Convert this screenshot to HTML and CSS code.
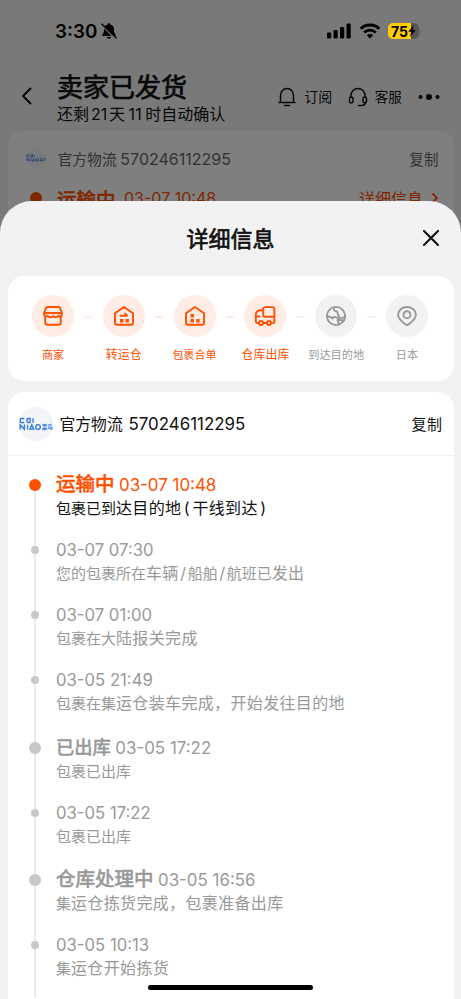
FILE: index.html
```html
<!DOCTYPE html>
<html lang="zh-CN">
<head>
<meta charset="utf-8">
<title>详细信息</title>
<link rel="stylesheet" href="styles.css">
</head>
<body>
<div class="phone">
  <div class="order">
    <header class="nav">
      <svg class="back" width="12" height="18" viewBox="0 0 12 18"><path d="M9.500 1.500 2 9l7.500 7.500"/></svg>
      <div class="nav-title">
        <h1>卖家已发货</h1>
        <p>还剩<span class="days">21</span>天<span class="days">11</span>时自动确认</p>
      </div>
      <svg class="line-icon" width="20" height="20" viewBox="0 0 20 20"><path d="M2 15.500h16M3.500 15V8.500a6.500 7 0 0 1 13 0V15M7.500 18.500h5"/></svg>
      <span class="nav-label subscribe">订阅</span>
      <svg class="line-icon" width="20" height="20" viewBox="0 0 20 20"><path d="M3 10V8.500a7 7 0 0 1 14 0V10M17.500 15c0 2.500-2 3.500-4 3.500h-3"/><rect x="1.500" y="10" width="3.500" height="6" rx="1.700"/><rect x="15" y="10" width="3.500" height="6" rx="1.700"/></svg>
      <span class="nav-label service">客服</span>
      <svg width="22" height="8" viewBox="0 0 22 8"><circle cx="2.500" cy="4" r="2"/><circle cx="11" cy="4" r="3"/><circle cx="19.500" cy="4" r="2"/></svg>
    </header>
    <section class="order-card">
      <div class="order-row">
        <svg class="mini-logo" width="20" height="20" viewBox="0 0 34 34"><circle cx="17" cy="17" r="17"/><use href="#cainiao"/></svg>
        <span class="order-carrier">官方物流 <span class="num">570246112295</span></span>
        <span class="order-copy">复制</span>
      </div>
      <div class="order-state">
        <i class="order-dot"></i><b>运输中</b><span class="num order-time">03-07 10:48</span>
        <span class="order-more">详细信息</span>
        <svg width="8" height="12" viewBox="0 0 8 12"><path d="m1.500 1.500 4.500 4.500-4.500 4.500"/></svg>
      </div>
    </section>
  </div>
  <div class="mask"></div>

  <div class="status">
    <span class="clock">3:30</span>
    <svg width="18" height="18" viewBox="0 0 18 18"><path d="M9 1.200c.8 0 1.300.5 1.500 1.200 2.400.7 3.500 2.500 3.500 5 0 3.200.7 4.100 1.700 5.200.5.600.2 1.400-.7 1.400H3c-.9 0-1.200-.8-.7-1.400C3.300 11.500 4 10.600 4 7.400c0-2.500 1.100-4.300 3.500-5C7.700 1.700 8.200 1.200 9 1.200ZM6.800 15h4.400c-.3 1.100-1.100 1.700-2.200 1.700S7.100 16.100 6.800 15Z"/><path class="slash-gap" d="m1.500 2.500 14 14"/><path class="slash" d="m1.500 1.700 15 14.600"/></svg>
    <svg class="signal" width="24" height="16" viewBox="0 0 24 16"><rect y="9.500" width="4.200" height="6" rx="1.200"/><rect x="6.500" y="7" width="4.200" height="8.500" rx="1.200"/><rect x="13" y="4" width="4.200" height="11.500" rx="1.200"/><rect x="19.500" y="0.500" width="4.200" height="15" rx="1.200"/></svg>
    <svg class="wifi" width="22" height="16" viewBox="0 0 22 16"><path d="M1.700 5.800a13.300 13.300 0 0 1 18.600 0M5.200 9.500a8.300 8.300 0 0 1 11.600 0"/><path class="wifi-dot" d="M7.800 12.300a4.600 4.600 0 0 1 6.400 0L11 15.500Z"/></svg>
    <div class="battery"><span>75</span><svg width="8" height="12" viewBox="0 0 8 12"><path d="M5.800 0 .3 6.700h3L2 12l5.700-6.900h-3Z"/></svg></div>
    <i class="battery-cap"></i>
  </div>

  <main class="sheet">
    <header class="sheet-head">
      <h2>详细信息</h2>
      <svg class="close" width="16" height="16" viewBox="0 0 16 16"><path d="m1 1 14 14M15 1 1 15"/></svg>
    </header>

    <section class="steps">
      <div class="step">
        <div class="step-icon"><svg width="22" height="22" viewBox="0 0 22 22"><path d="M5.500 2h11c.9 0 1.500.5 1.700 1.300L20 8.200v1c0 2-2.300 3-3.700 1.500-1.400 2-3.400 1.700-5.300.4-1.900 1.300-3.900 1.600-5.300-.4C4.300 12.200 2 11.200 2 9.200v-1l1.800-4.900C4 2.500 4.600 2 5.500 2ZM2.500 8h17M3.200 11.800v5.700c0 1.400.9 2.200 2.300 2.200h11c1.400 0 2.300-.8 2.300-2.200v-5.700"/></svg></div>
        <span class="l2">商家</span>
      </div>
      <i class="dash"></i>
      <div class="step">
        <div class="step-icon"><svg width="22" height="22" viewBox="0 0 22 22"><path d="M2 8.200v9.600c0 1.200.8 2 2 2h14c1.200 0 2-.8 2-2V8.200L11 2ZM7.500 10.700h6.500M12.200 8.700l2 2"/><path class="fill" d="M7 14h3.400v3.400H7ZM12.500 14h3.400v3.400h-3.400Z"/></svg></div>
        <span class="l3">转运仓</span>
      </div>
      <i class="dash"></i>
      <div class="step">
        <div class="step-icon"><svg width="22" height="22" viewBox="0 0 22 22"><path d="M2 8.200v9.600c0 1.200.8 2 2 2h14c1.200 0 2-.8 2-2V8.200L11 2Z"/><path class="fill" d="M6.500 9h3.400v3.400H6.500ZM6.500 14h3.400v3.400H6.500ZM12.200 14h3.400v3.400h-3.400Z"/></svg></div>
        <span class="l2">包裹合单</span>
      </div>
      <i class="dash"></i>
      <div class="step">
        <div class="step-icon"><svg width="22" height="22" viewBox="0 0 22 22"><path d="M4.200 18H3.600c-1.100 0-1.800-.7-1.800-1.800V10c0-3 1.900-4.800 5-4.800h2.400M9.200 4.200c0-1.300.8-2.100 2.100-2.100h7c1.300 0 2.100.8 2.100 2.100v12c0 1.200-.7 1.900-1.800 1.900M9.800 18h2.500M9.200 4.200v5.500c0 1.200.8 2 2.100 2h9M2 11.500h3.500"/><circle cx="7" cy="18" r="2"/><circle cx="15" cy="18" r="2"/></svg></div>
        <span class="l3">仓库出库</span>
      </div>
      <i class="dash todo-dash"></i>
      <div class="step todo">
        <div class="step-icon"><svg width="22" height="22" viewBox="0 0 22 22"><circle cx="11" cy="11" r="9.100"/><path d="M9 2.500c-.6 2.400.4 3.500 2.300 3.800 2.200.4.600 2.800 2.400 4 .8 1.600-1 2.900-2.700 2-1.500-1-3.200-.2-3.500 1.200-1.300-1.600-3-2.200-5.300-2M20 12.500c-2.500-.5-4.500.2-6.500 1.700M19 15.200c-2.500.2-4.300-.2-6.500-.2.300 1.500 1.500 2.500 1 4.500"/></svg></div>
        <span class="l1">到达目的地</span>
      </div>
      <i class="dash todo-dash"></i>
      <div class="step todo">
        <div class="step-icon"><svg width="22" height="22" viewBox="0 0 22 22"><path d="M9.300 19.300c-3.500-2.600-7.200-5.700-7.200-9.800C2.100 5.300 6 2 11 2s8.900 3.300 8.900 7.500c0 4.100-3.700 7.200-7.200 9.800-1.200.9-2.200.9-3.400 0Z"/><circle cx="11" cy="9.700" r="3.500"/></svg></div>
        <span class="l1">日本</span>
      </div>
    </section>

    <section class="track">
      <header class="carrier">
        <svg class="logo" width="34" height="34" viewBox="0 0 34 34">
          <circle cx="17" cy="17" r="17"/>
          <g id="cainiao"><path d="M5.300 11.500H2.200a1 1 0 0 0-1 1v2a1 1 0 0 0 1 1h3.100M8 13.300v-.8a1 1 0 0 1 1-1h2v4H9a1 1 0 0 1-1-1ZM14 11.200v4.500M1.200 22.500v-4.700l4.200 4.500v-4.800M8.500 17.800v4.700M10.800 22.200l2-4.400 2 4.400Z"/><circle cx="19" cy="20" r="2.300"/><text x="22.800" y="22.300">菜鸟</text></g>
        </svg>
        <span class="carrier-name">官方物流</span><span class="num carrier-no">570246112295</span>
        <span class="copy">复制</span>
      </header>
      <ol class="timeline">
        <li class="major current"><div class="when"><b>运输中</b><time>03-07 10:48</time></div><p>包裹已到<span class="w">达目的地<span class="paren">(</span>干线到达<span class="paren">)</span></span></p></li>
        <li><div class="when"><time>03-07 07:30</time></div><p>您的包裹所在<span class="w">车辆</span><span class="bar">/</span>船舶<span class="bar">/</span>航班已<span class="w">发出</span></p></li>
        <li><div class="when"><time>03-07 01:00</time></div><p>包裹在大<span class="w">陆报关完成</span></p></li>
        <li><div class="when"><time>03-05 21:49</time></div><p>包裹在集<span class="w">运仓装车完成，开始发往目的地</span></p></li>
        <li class="major"><div class="when"><b class="small">已出库</b><time>03-05 17:22</time></div><p>包裹已出库</p></li>
        <li><div class="when"><time>03-05 17:22</time></div><p>包裹已出库</p></li>
        <li class="major"><div class="when"><b>仓库处理中</b><time>03-05 16:56</time></div><p>集<span class="w">运仓拣货完成，包裹准备出库</span></p></li>
        <li><div class="when"><time>03-05 10:13</time></div><p>集<span class="w">运仓开始拣货</span></p></li>
      </ol>
    </section>
    <div class="home"></div>
  </main>
</div>
</body>
</html>
```
FILE: styles.css
```css
* { box-sizing: border-box; }
body, h1, h2, p, ol { margin: 0; padding: 0; }
body { font-family: Inter, "Noto Sans CJK SC", sans-serif; color: #111; }
svg { display: block; flex: none; }
i { display: block; flex: none; }
h1, h2, b { font-weight: 400; -webkit-text-stroke: .7px currentColor; }
.phone { position: relative; width: 461px; height: 999px; overflow: hidden; background: #f2f2f2; }

.order { padding-top: 68px; }
.nav { display: flex; align-items: center; height: 63px; padding: 0 21px; }
.nav > svg, .nav > .nav-label { margin-top: -6px; }
.nav > .nav-label { margin-top: -7px; }
.nav > .back { margin-top: -8px; }
.back { fill: none; stroke: #111; stroke-width: 2; stroke-linecap: round; stroke-linejoin: round; }
.nav-title { width: 222px; margin: -5px 0 0 24px; white-space: nowrap; }
h1 { font-size: 26px; line-height: 34px; position: relative; top: 1px; }
.nav-title p { font-size: 16px; line-height: 21px; letter-spacing: .05px; }
.days { display: inline-block; width: 20px; text-align: center; }
.line-icon { fill: none; stroke: #111; stroke-width: 1.500; stroke-linecap: round; }
.nav-label { font-size: 14px; white-space: nowrap; }
.subscribe { margin-left: 7px; width: 44px; }
.service { margin-left: 7px; width: 43.500px; font-size: 13.500px; }
.order-card { height: 100px; margin: 0 7.500px; padding: 17px 14.500px 0 18px; background: #fff; border-radius: 14px; }
.order-row { display: flex; align-items: center; height: 20px; color: #666; font-size: 14.800px; }
.mini-logo circle:first-child { fill: #f2f4f8; }
.order-carrier { margin-left: 12px; white-space: nowrap; }
.order-carrier .num { font-size: 16px; margin-left: -.5px; }
.order-copy { margin-left: auto; font-size: 14.500px; letter-spacing: .4px; }
.order-state { display: flex; align-items: center; height: 26px; margin-top: 17px; color: #ff5000; white-space: nowrap; }
.order-dot { width: 12px; height: 12px; border-radius: 50%; background: #ff5000; margin: 0 15.500px 0 4px; }
.order-state b { font-size: 19.500px; }
.order-time { margin-left: 8.500px; font-size: 16px; }
.order-more { margin-left: auto; font-size: 16px; margin-right: 8px; }
.order-state svg { fill: none; stroke: #ff5000; stroke-width: 1.800; }
.mask { position: absolute; inset: 0; background: rgba(0, 0, 0, .5); }

.status { position: absolute; top: 20px; left: 0; right: 0; height: 22px; padding-left: 55px; display: flex; align-items: center; color: #000; }
.clock { width: 45px; font-size: 18.800px; font-weight: 600; }
.slash { stroke: #000; stroke-width: 1.300; }
.slash-gap { stroke: #797979; stroke-width: 2; }
.signal { margin-left: 209px; }
.wifi { margin-left: 8px; fill: none; stroke: #000; stroke-width: 2.800; }
.wifi-dot { fill: #000; stroke: none; }
.battery { display: flex; align-items: center; width: 31px; height: 16px; margin-left: 6.500px; padding-left: 3.500px; border-radius: 5px; background: linear-gradient(90deg, #ffcc00 23px, #575757 23px); font-size: 14px; font-weight: 700; }
.battery span { width: 16.500px; }
.battery svg { margin-left: .5px; }
.battery-cap { width: 1.500px; height: 5px; margin-left: 1px; border-radius: 1px; background: #666; }

.sheet { position: absolute; top: 200.500px; left: 0; right: 0; bottom: 0; overflow: hidden; background: #f2f2f2; border-radius: 32px 32px 0 0; }
.sheet-head { display: grid; grid-template-columns: 1fr auto 1fr; align-items: center; height: 75px; padding: 0 22px; }
h2 { grid-column: 2; margin-top: 1px; font-size: 22px; line-height: 30px; }
.close { justify-self: end; fill: none; stroke: #111; stroke-width: 2.100; stroke-linecap: round; }

.steps { display: flex; height: 105.500px; margin: 0 7.500px; padding: 19px 24.500px 0; border-radius: 16px; background: #fff; }
.step { display: flex; flex-direction: column; align-items: center; width: 42px; flex: none; color: #ff5000; }
.step-icon { display: grid; place-items: center; width: 42px; height: 42px; border-radius: 50%; background: #ffece5; }
.step-icon svg { fill: none; stroke: currentColor; stroke-width: 1.900; stroke-linejoin: round; stroke-linecap: round; }
.step-icon .fill { fill: currentColor; stroke: none; }
.step > span { margin-top: 10px; line-height: 16px; white-space: nowrap; font-size: 11px; }
.step > .l3 { font-size: 12px; }
.step > .l1 { font-size: 11.200px; }
.todo { color: #999; }
.todo .step-icon { background: #f2f2f2; }
.dash { width: 8px; height: 2px; margin: 21px 10.500px 0 10.300px; background: #ffece5; }
.todo-dash { background: #f2f2f2; }

.track { height: 700px; margin: 11px 7.500px 0; background: #fff; border-radius: 16px; }
.carrier { display: flex; align-items: center; height: 64px; padding: 0 11px; border-bottom: 1px solid #f1f1f1; }
.logo circle:first-child { fill: #f2f4f8; }
#cainiao { fill: none; stroke: #2878e0; stroke-width: 1.300; }
#cainiao text { font-size: 5.500px; font-weight: 700; fill: #2878e0; stroke: none; }
.carrier-name { margin-left: 7px; font-size: 15.800px; width: 69px; white-space: nowrap; }
.carrier-no { font-size: 16.900px; }
.copy { margin-left: auto; font-size: 15px; letter-spacing: .5px; }

.timeline { list-style: none; padding-top: 16px; }
.timeline li { position: relative; height: 65px; padding-left: 48.500px; color: #999; white-space: nowrap; }
.timeline li.major { height: 67.500px; padding-top: 1.500px; }
.timeline li:first-child { margin-top: -1.500px; }
.timeline li::before { content: ""; position: absolute; left: 26.500px; top: 0; bottom: 0; width: 2px; background: #ebebeb; }
.timeline li:first-child::before { top: 14px; }
.timeline li::after { content: ""; position: absolute; left: 23.500px; top: 8px; width: 8px; height: 8px; border-radius: 50%; background: #c8c8c8; }
.timeline li.major::after { left: 21.500px; top: 8.500px; width: 12px; height: 12px; }
.when { display: flex; align-items: baseline; height: 24px; line-height: 24px; }
.major .when { margin-bottom: 1px; }
.when b { font-size: 19.500px; margin-right: 4.500px; }
.when .small { font-size: 18.300px; }
time { font-size: 16.700px; }
.major time { font-size: 16.900px; }
.timeline p { font-size: 15px; line-height: 23.500px; }
.timeline .w { font-size: 16px; letter-spacing: .35px; }
.paren { display: inline-block; width: 11px; text-align: center; }
.bar { display: inline-block; width: 9px; text-align: center; font-size: 16px; }
.timeline .current { color: #ff5000; }
.timeline .current::after { background: #ff5000; }
.current p { color: #111; }
.home { position: absolute; left: 148px; bottom: 9px; width: 165px; height: 5px; border-radius: 3px; background: #000; }
```
